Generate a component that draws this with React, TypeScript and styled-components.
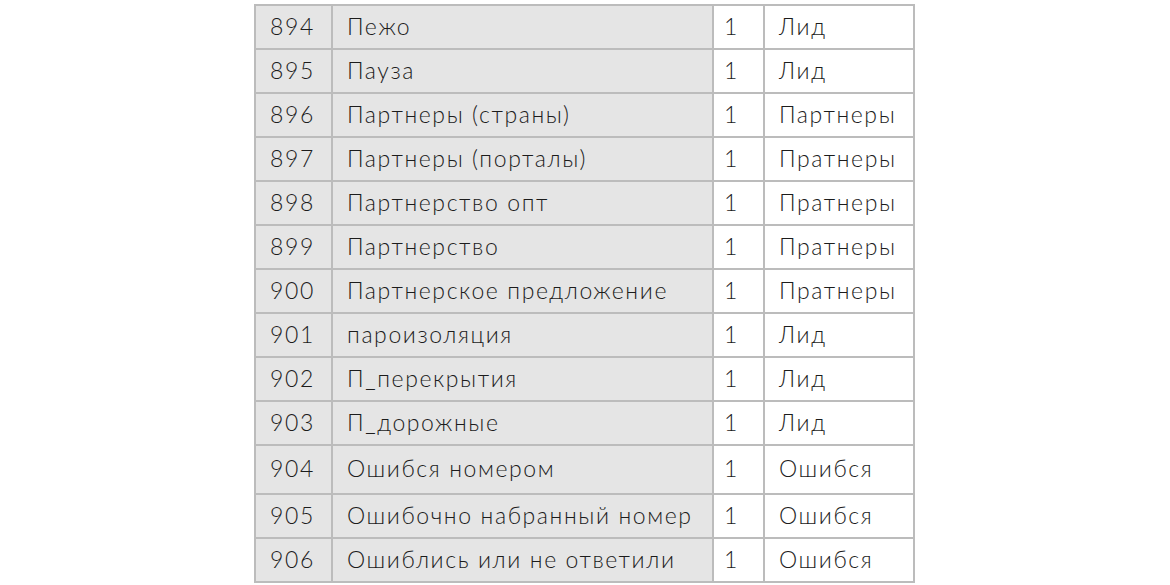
import React from "react";
import styled, { createGlobalStyle } from "styled-components";

const Global = createGlobalStyle`
  html, body { margin: 0; padding: 0; background: #ffffff; }
  body { font-family: "Lato", "Open Sans", sans-serif; }
`;

const Page = styled.div`
  display: flex;
  justify-content: center;
  padding-top: 4px;
`;

const Table = styled.table`
  border-collapse: collapse;
  table-layout: fixed;
  width: 659px;
  margin-left: -1px;
`;

const Row = styled.tr<{ $h: number }>`
  height: ${(p) => p.$h}px;
`;

const Cell = styled.td<{ $shaded?: boolean; $w: number; $pl?: number }>`
  width: ${(p) => p.$w}px;
  border: 2px solid #bcbcbc;
  background: ${(p) => (p.$shaded ? "#e5e5e5" : "#ffffff")};
  padding: 0 0 3px ${(p) => p.$pl ?? 14}px;
  font-family: "Lato", sans-serif;
  font-weight: 300;
  font-size: 23px;
  color: #1c1c1c;
  letter-spacing: 1.6px;
  white-space: nowrap;
  vertical-align: middle;
  box-sizing: border-box;
`;

const rows: [string, string, string, string][] = [
  ["894", "Пежо", "1", "Лид"],
  ["895", "Пауза", "1", "Лид"],
  ["896", "Партнеры (страны)", "1", "Партнеры"],
  ["897", "Партнеры (порталы)", "1", "Пратнеры"],
  ["898", "Партнерство опт", "1", "Пратнеры"],
  ["899", "Партнерство", "1", "Пратнеры"],
  ["900", "Партнерское предложение", "1", "Пратнеры"],
  ["901", "пароизоляция", "1", "Лид"],
  ["902", "П_перекрытия", "1", "Лид"],
  ["903", "П_дорожные", "1", "Лид"],
  ["904", "Ошибся номером", "1", "Ошибся"],
  ["905", "Ошибочно набранный номер", "1", "Ошибся"],
  ["906", "Ошиблись или не ответили", "1", "Ошибся"],
];

export default function App() {
  return (
    <>
      <Global />
      <Page>
        <Table>
          <tbody>
            {rows.map((r) => (
              <Row key={r[0]} $h={r[0] === "904" ? 49 : 44}>
                <Cell $shaded $w={77}>{r[0]}</Cell>
                <Cell $shaded $w={381}>{r[1]}</Cell>
                <Cell $w={51} $pl={10}>{r[2]}</Cell>
                <Cell $w={150}>{r[3]}</Cell>
              </Row>
            ))}
          </tbody>
        </Table>
      </Page>
    </>
  );
}
